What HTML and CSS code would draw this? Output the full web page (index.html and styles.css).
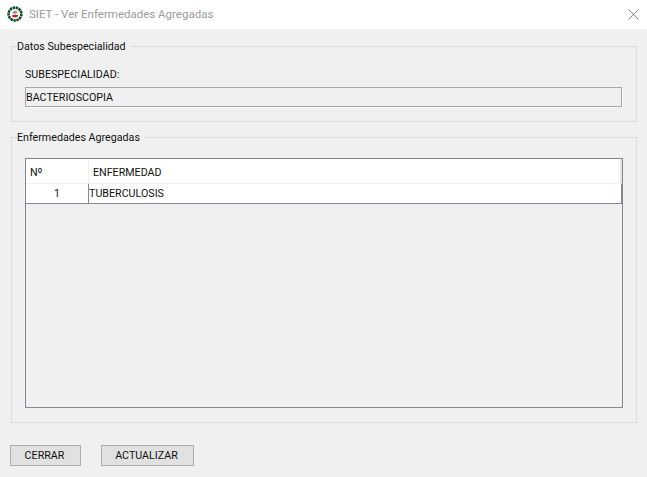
FILE: index.html
```html
<!DOCTYPE html>
<html lang="es">
<head>
<meta charset="utf-8">
<title>SIET - Ver Enfermedades Agregadas</title>
<link rel="stylesheet" href="styles.css">
</head>
<body>
<header class="titlebar">
  <svg class="logo" width="16" height="16" viewBox="0 0 16 16" aria-hidden="true">
    <circle cx="8" cy="8" r="6.4" fill="none" stroke="#14492a" stroke-width="2.6" stroke-dasharray="2.4 .6"/>
    <circle cx="8" cy="8" r="4.6" fill="#fff"/>
    <path d="M5.2 7.6 7.6 4.4l1.6 3z" fill="#3f86c4"/>
    <path d="M8 4.8h2.4v2.6H8z" fill="#d8a040"/>
    <path d="M4.6 9.8c1.6-1.4 4.6-1.4 6.8-.6-1 2.6-5 3-6.8.6z" fill="#d01818"/>
  </svg>
  <span class="title">SIET - Ver Enfermedades Agregadas</span>
  <svg class="close" width="11" height="11" viewBox="0 0 11 11" aria-hidden="true">
    <path d="M.5.5l10 10M10.5.5l-10 10" stroke="#8a8a8a" stroke-width="1" fill="none"/>
  </svg>
</header>
<main class="content">
  <fieldset class="group group-top">
    <legend>Datos Subespecialidad</legend>
    <div class="field-label">SUBESPECIALIDAD:</div>
    <div class="field-value">BACTERIOSCOPIA</div>
  </fieldset>
  <fieldset class="group group-table">
    <legend>Enfermedades Agregadas</legend>
    <div class="table">
      <div class="thead">
        <div class="th th-num">Nº</div>
        <div class="th th-name">ENFERMEDAD</div>
      </div>
      <div class="row">
        <div class="td td-num">1</div>
        <div class="td td-name">TUBERCULOSIS</div>
      </div>
    </div>
  </fieldset>
  <div class="actions">
    <button class="btn btn-close" type="button">CERRAR</button>
    <button class="btn btn-update" type="button">ACTUALIZAR</button>
  </div>
</main>
</body>
</html>
```
FILE: styles.css
```css
* { box-sizing: border-box; }
html, body { margin: 0; height: 100%; }
body {
  background: #f0f0f0;
  font-family: Roboto, "Liberation Sans", sans-serif;
  font-size: 10.7px;
  color: #111;
  overflow: hidden;
}
.titlebar {
  height: 29px;
  background: #fff;
  display: flex;
  align-items: center;
  padding: 0 8px 1px 7px;
}
.logo { flex: none; }
.title {
  margin-left: 6px;
  font-family: Roboto, sans-serif;
  font-size: 11.5px;
  color: #9a9a9a;
}
.close { margin-left: auto; }
.content { padding: 0 10px 0 11px; }
.group {
  margin: 0;
  border: 1px solid #dcdcdc;
  padding: 0;
  min-width: 0;
}
.group legend {
  margin-left: -8px;
  padding: 2px 4px 0 0;
  line-height: 14px;
}
.group-top {
  margin-top: 9px;
  height: 84px;
  padding: 14px 14px 0 13px;
}
.field-label { line-height: 14px; }
.field-value {
  margin-top: 5px;
  height: 20px;
  line-height: 20px;
  border: 1px solid #a8a8a8;
  box-shadow: 1px 1px 0 #fff;
}
.group-table {
  margin-top: 7px;
  height: 294px;
  padding: 13px 13px 14px 13px;
}
.table {
  height: 250px;
  border: 1px solid #83878f;
}
.thead {
  display: flex;
  height: 25px;
  background: #fff;
  border-bottom: 1px solid #efefef;
  border-right: 2px solid #e4e4e4;
}
.th { padding-top: 1px; line-height: 25px; }
.th-num { width: 63px; padding-left: 4px; border-right: 1px solid #efefef; }
.th-name { padding-left: 4px; }
.row {
  display: flex;
  height: 20px;
  background: #fff;
  border-bottom: 1px solid #83878f;
  border-right: 1px solid #83878f;
}
.td { line-height: 20px; }
.td-num { width: 63px; text-align: center; border-right: 1px solid #83878f; }
.td-name { padding-left: 0; }
.actions {
  display: flex;
  gap: 20px;
  margin: 22px 0 0 -1px;
}
.btn {
  height: 21px;
  padding: 0 2px 0 0;
  background: #e1e1e1;
  border: 1px solid #adadad;
  font: inherit;
  color: #111;
}
.btn-close { width: 71px; }
.btn-update { width: 93px; }
```
